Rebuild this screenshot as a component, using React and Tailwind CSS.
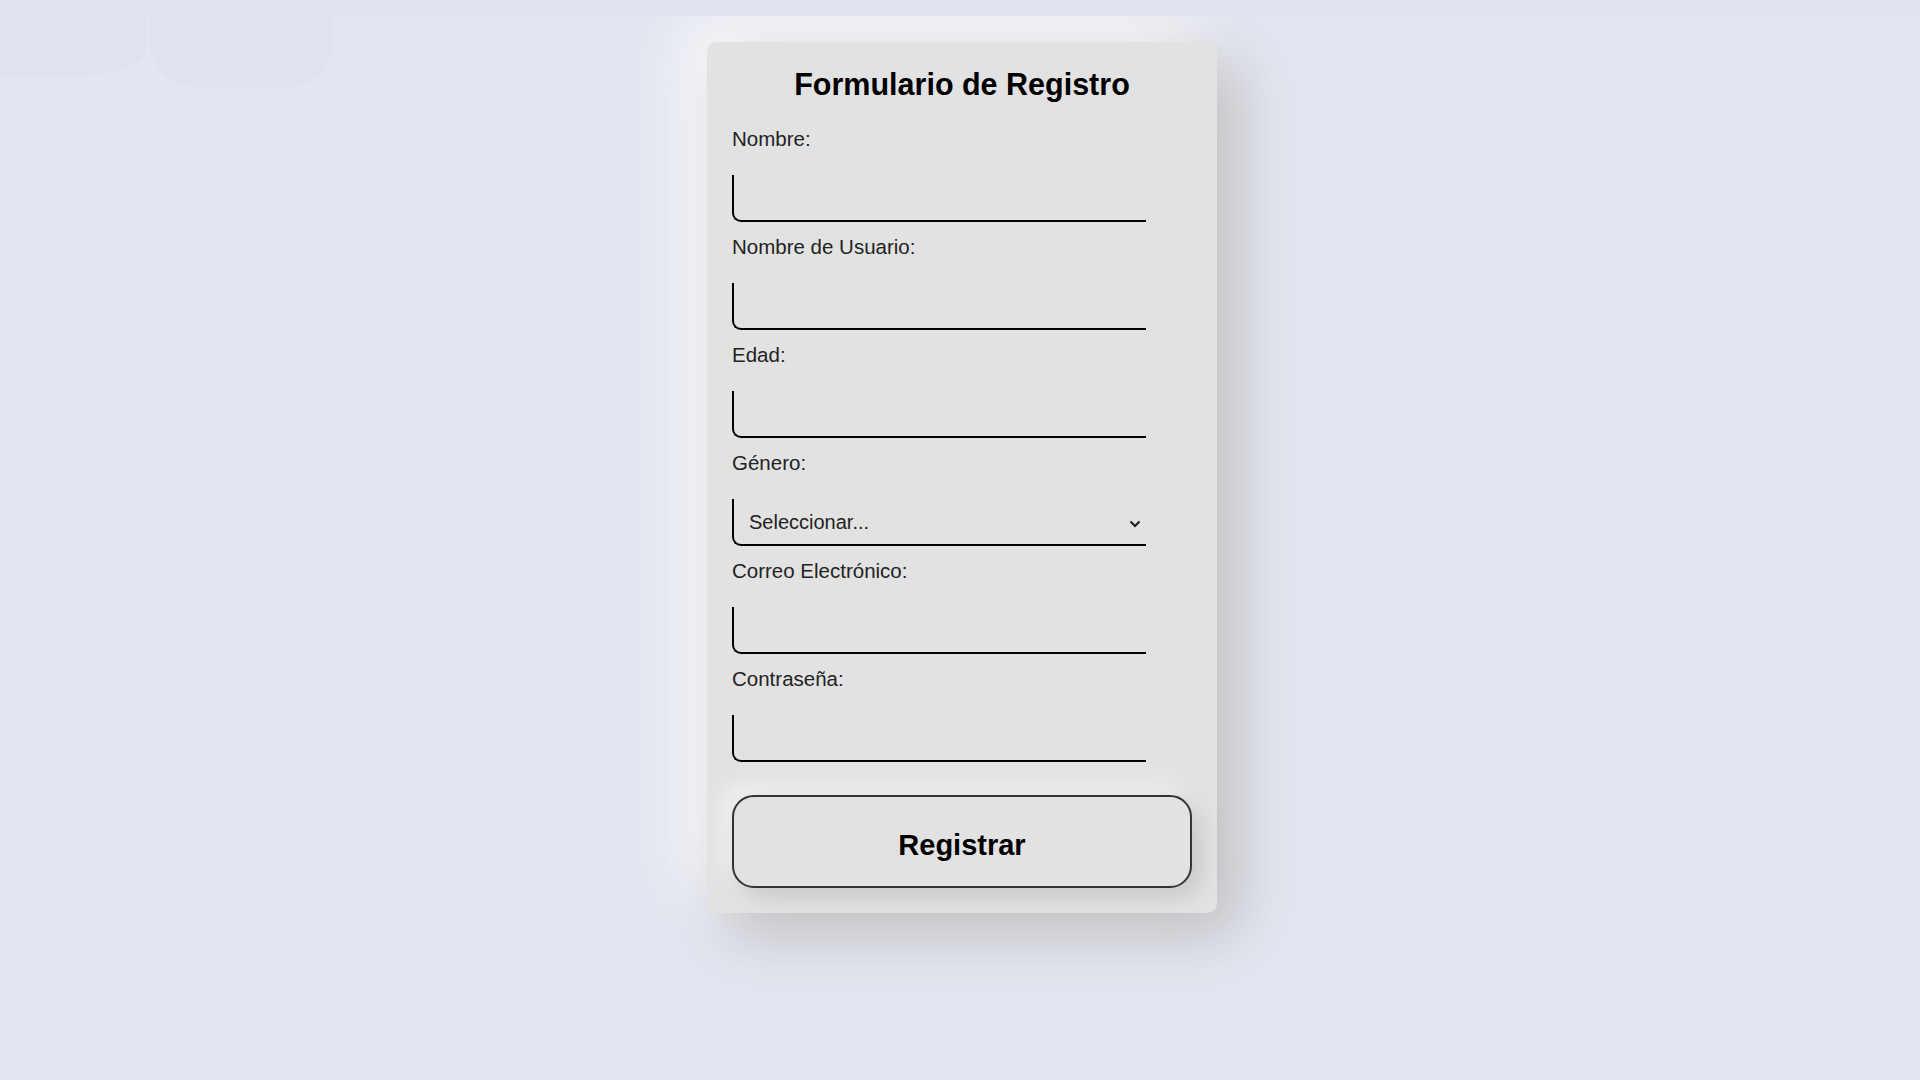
import React, { useState } from "react";

const fields = [
  { id: "nombre", label: "Nombre:", type: "text" },
  { id: "usuario", label: "Nombre de Usuario:", type: "text" },
  { id: "edad", label: "Edad:", type: "number" },
  { id: "genero", label: "Género:", type: "select" },
  { id: "correo", label: "Correo Electrónico:", type: "email" },
  { id: "password", label: "Contraseña:", type: "password" },
];

const inputClass =
  "h-[47px] bg-transparent border-0 border-l-2 border-b-2 border-black rounded-bl-[9px] outline-none px-[15px] text-[20px] text-[#222]";

const App = () => {
  const [values, setValues] = useState({});

  const handleChange = (id, value) => {
    setValues({ ...values, [id]: value });
  };

  return (
    <div className="min-h-screen bg-[#e0e2ee] pt-4 font-['Liberation_Sans',_Arial,_sans-serif]">
      <div className="relative min-h-[1064px] overflow-hidden bg-[#e3e5f0] flex justify-center items-start pl-[4px]">
        {/* faint shapes top-left */}
        <div className="absolute left-0 -top-4 w-[145px] h-[75px] bg-[#e0e2ee] rounded-br-[60px_25px]" />
        <div className="absolute left-[150px] -top-4 w-[183px] h-[87px] bg-[#e0e2ee] rounded-b-[45px]" />

        <div className="relative mt-[26px] w-[510px] bg-[#e2e2e2] rounded-[10px] px-[25px] pt-[24px] pb-[25px] shadow-[20px_20px_60px_#bebebe,-20px_-20px_60px_#ffffff]">
          <h2 className="text-center text-[30.5px] leading-[36px] font-bold text-black">
            Formulario de Registro
          </h2>

          <form className="mt-[25px] flex flex-col" onSubmit={(e) => e.preventDefault()}>
            {fields.map((field) => (
              <div key={field.id} className="flex flex-col mb-[13px]">
                <label htmlFor={field.id} className="text-[20.5px] leading-[24px] text-[#222] mb-[24px]">
                  {field.label}
                </label>
                {field.type === "select" ? (
                  <div className="relative w-[90%]">
                    <select
                      id={field.id}
                      value={values[field.id] || ""}
                      onChange={(e) => handleChange(field.id, e.target.value)}
                      className={inputClass + " w-full appearance-none"}
                    >
                      <option value="">Seleccionar...</option>
                      <option value="m">Masculino</option>
                      <option value="f">Femenino</option>
                      <option value="o">Otro</option>
                    </select>
                    <svg
                      className="absolute right-[5px] top-[21px] pointer-events-none"
                      width="12"
                      height="8"
                      viewBox="0 0 12 8"
                      fill="none"
                    >
                      <path d="M1.5 1.5 L6 6 L10.5 1.5" stroke="#222" strokeWidth="2.2" />
                    </svg>
                  </div>
                ) : (
                  <input
                    id={field.id}
                    type={field.type}
                    value={values[field.id] || ""}
                    onChange={(e) => handleChange(field.id, e.target.value)}
                    className={inputClass + " w-[90%]"}
                  />
                )}
              </div>
            ))}

            <button
              type="submit"
              className="mt-[20px] w-full h-[93px] pt-[9px] rounded-[22px] border-2 border-[#333] bg-[#e2e2e2] text-[29px] font-bold text-black shadow-[8px_8px_22px_#c6c6c6,-8px_-8px_22px_#f6f6f6]"
            >
              Registrar
            </button>
          </form>
        </div>
      </div>
    </div>
  );
};

export default App;
